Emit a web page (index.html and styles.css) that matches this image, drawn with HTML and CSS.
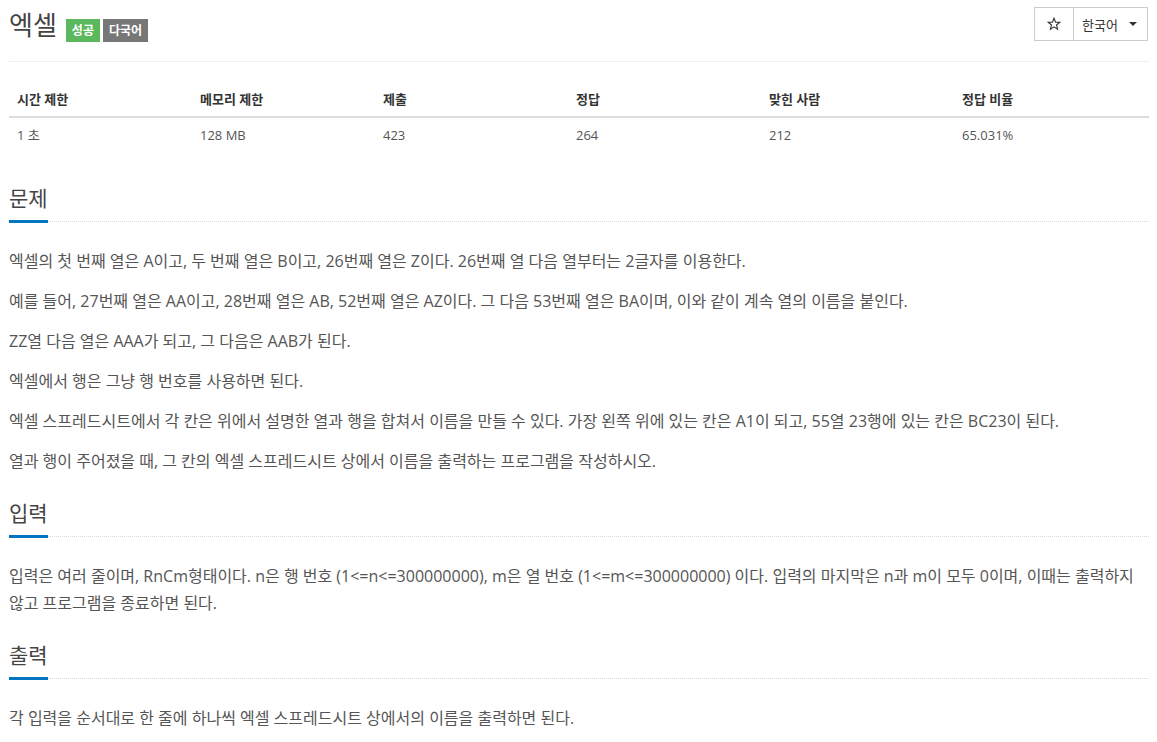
FILE: index.html
```html
<!DOCTYPE html>
<html lang="ko">
  <head>
    <meta charset="UTF-8" />
    <meta name="viewport" content="width=device-width, initial-scale=1.0" />
    <title>엑셀</title>
    <link rel="stylesheet" href="styles.css">
  </head>
  <body>
    <div class="page">
      <div class="page-header">
        <h1 class="title">
          <span class="title-text">엑셀</span>
          <span class="label label-success">성공</span>
          <span class="label label-default">다국어</span>
        </h1>
        <div class="btn-group">
          <button class="btn btn-star" title="즐겨찾기">
            <svg width="14" height="14" viewBox="0 0 14 14">
              <polygon points="7,1.2 8.6,5.1 12.8,5.3 9.5,8 10.6,12.2 7,9.8 3.4,12.2 4.5,8 1.2,5.3 5.4,5.1" fill="none" stroke="#333" stroke-width="1.1" stroke-linejoin="miter" />
            </svg>
          </button>
          <button class="btn btn-lang">
            <span>한국어</span>
            <span class="caret"></span>
          </button>
        </div>
      </div>

      <table class="info-table">
        <colgroup>
          <col class="col-short" />
          <col class="col-short" />
          <col class="col-wide" />
          <col class="col-wide" />
          <col class="col-wide" />
          <col />
        </colgroup>
        <thead>
          <tr>
            <th>시간 제한</th>
            <th>메모리 제한</th>
            <th>제출</th>
            <th>정답</th>
            <th>맞힌 사람</th>
            <th>정답 비율</th>
          </tr>
        </thead>
        <tbody>
          <tr>
            <td>1 초</td>
            <td>128 MB</td>
            <td>423</td>
            <td>264</td>
            <td>212</td>
            <td>65.031%</td>
          </tr>
        </tbody>
      </table>

      <section class="problem-section">
        <div class="headline">
          <h2>문제</h2>
        </div>
        <div class="problem-text">
          <p>엑셀의 첫 번째 열은 A이고, 두 번째 열은 B이고, 26번째 열은 Z이다. 26번째 열 다음 열부터는 2글자를 이용한다.</p>
          <p>예를 들어, 27번째 열은 AA이고, 28번째 열은 AB, 52번째 열은 AZ이다. 그 다음 53번째 열은 BA이며, 이와 같이 계속 열의 이름을 붙인다.</p>
          <p>ZZ열 다음 열은 AAA가 되고, 그 다음은 AAB가 된다.</p>
          <p>엑셀에서 행은 그냥 행 번호를 사용하면 된다.</p>
          <p>엑셀 스프레드시트에서 각 칸은 위에서 설명한 열과 행을 합쳐서 이름을 만들 수 있다. 가장 왼쪽 위에 있는 칸은 A1이 되고, 55열 23행에 있는 칸은 BC23이 된다.</p>
          <p>열과 행이 주어졌을 때, 그 칸의 엑셀 스프레드시트 상에서 이름을 출력하는 프로그램을 작성하시오.</p>
        </div>
      </section>

      <section class="problem-section">
        <div class="headline">
          <h2>입력</h2>
        </div>
        <div class="problem-text">
          <p>입력은 여러 줄이며, RnCm형태이다. n은 행 번호 (1&lt;=n&lt;=300000000), m은 열 번호 (1&lt;=m&lt;=300000000) 이다. 입력의 마지막은 n과 m이 모두 0이며, 이때는 출력하지 않고 프로그램을 종료하면 된다.</p>
        </div>
      </section>

      <section class="problem-section">
        <div class="headline">
          <h2>출력</h2>
        </div>
        <div class="problem-text">
          <p>각 입력을 순서대로 한 줄에 하나씩 엑셀 스프레드시트 상에서의 이름을 출력하면 된다.</p>
        </div>
      </section>
    </div>
  </body>
</html>
```

FILE: styles.css
```css
* {
  box-sizing: border-box;
}

body {
  margin: 0;
  background: #fff;
  color: #555;
  font-family: "Open Sans", "Noto Sans CJK KR", sans-serif;
  font-size: 13px;
}

.page {
  padding: 0 8px 0 9px;
}

/* header */

.page-header {
  display: flex;
  justify-content: space-between;
  align-items: flex-start;
  padding: 7px 0 18px;
  border-bottom: 1px solid #eee;
}

.title {
  display: flex;
  align-items: flex-end;
  margin: 0;
  font-weight: normal;
}

.title-text {
  font-size: 26px;
  line-height: 36px;
  color: #444;
  margin-right: 9px;
}

.label {
  display: inline-block;
  margin: 0 3px 1px 0;
  padding: 0 6px;
  line-height: 23px;
  font-size: 12px;
  font-weight: bold;
  color: #fff;
}

.label-success {
  background: #5cb85c;
}

.label-default {
  background: #777;
}

.btn-group {
  display: flex;
  margin-right: 1px;
}

.btn {
  display: flex;
  align-items: center;
  height: 34px;
  margin: 0;
  border: 1px solid #ccc;
  background: #fff;
  color: #333;
  font-family: inherit;
  font-size: 13px;
  cursor: pointer;
}

.btn-star {
  width: 40px;
  justify-content: center;
  padding: 0;
}

.btn-lang {
  margin-left: -1px;
  padding: 0 10px 0 8px;
  gap: 11px;
}

.caret {
  width: 0;
  height: 0;
  border-top: 4px solid #333;
  border-left: 4px solid transparent;
  border-right: 4px solid transparent;
}

/* info table */

.info-table {
  width: 100%;
  margin-top: 20px;
  border-collapse: collapse;
  table-layout: fixed;
}

.col-short {
  width: 183px;
}

.col-wide {
  width: 193px;
}

.info-table th,
.info-table td {
  padding: 8px;
  line-height: 18px;
  text-align: left;
}

.info-table th {
  color: #333;
  font-weight: bold;
  border-bottom: 2px solid #ddd;
}

/* problem sections */

.problem-section {
  padding-bottom: 10px;
}

.problem-section:first-of-type {
  margin-top: 31px;
}

.headline {
  display: flex;
  border-bottom: 1px dotted #d3d9e2;
  margin-bottom: 26px;
}

.headline h2 {
  margin: 0 0 -2px;
  padding-bottom: 7px;
  font-size: 21px;
  line-height: 30px;
  font-weight: normal;
  color: #444;
  border-bottom: 3px solid #0076c0;
}

.problem-text {
  font-size: 16px;
  line-height: 27px;
}

.problem-text p {
  margin: 0 0 13px;
}
```
